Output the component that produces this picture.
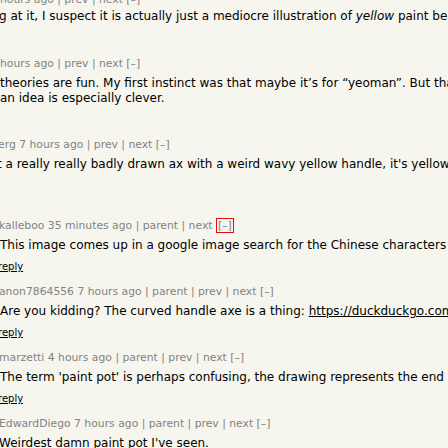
import React from 'react';

const font = "font-['DejaVu_Sans',Verdana,sans-serif]";

function Meta({ children, className = '' }: { children: React.ReactNode; className?: string }) {
  return (
    <div className={`text-[10.8px] leading-[13px] text-[#828282] whitespace-nowrap ${className}`}>{children}</div>
  );
}

function Text({ children, className = '' }: { children: React.ReactNode; className?: string }) {
  return <div className={`text-[12px] leading-[15px] text-black whitespace-nowrap ${className}`}>{children}</div>;
}

function Reply({ hidden = false }: { hidden?: boolean }) {
  return (
    <div className="text-[10px] leading-[13px] mt-[7px] ml-[-2px] h-[13px]">
      {!hidden && <span className="underline text-black">reply</span>}
    </div>
  );
}

export default function App() {
  return (
    <div className={`w-[448px] h-[448px] overflow-hidden bg-[#f6f6ef] ${font}`}>
      {/* comment cut at top */}
      <div className="mt-[-7px]">
        <Meta>hours ago | prev | next [–]</Meta>
        <Text className="mt-[3px] ml-[-1px]">
          g at it, I suspect it is actually just a mediocre illustration of <i>yellow</i> paint being
        </Text>
        <Reply hidden />
      </div>

      <div className="mt-[13px]">
        <Meta>hours ago | prev | next [–]</Meta>
        <Text className="mt-[6px]">
          theories are fun. My first instinct was that maybe it’s for “yeoman”. But that doesn’t
          <br />
          an idea is especially clever.
        </Text>
        <Reply hidden />
      </div>

      <div className="mt-[12px]">
        <Meta className="ml-[-2px]">erg 7 hours ago | prev | next [–]</Meta>
        <Text className="mt-[6px] ml-[-3px]">
          t a really really badly drawn ax with a weird wavy yellow handle, it's yellow
        </Text>
        <Reply hidden />
      </div>

      <div className="mt-[27px]">
        <Meta className="ml-[-1px]">
          kalleboo 35 minutes ago | parent | next{' '}
          <span className="border border-[#e01010] px-[1px] py-[0px]">[–]</span>
        </Meta>
        <Text className="mt-[6px]">
          This image comes up in a google image search for the Chinese characters
        </Text>
        <Reply />
      </div>

      <div className="mt-[12px]">
        <Meta className="ml-[-1px]">anon7864556 7 hours ago | parent | prev | next [–]</Meta>
        <Text className="mt-[6px]">
          Are you kidding? The curved handle axe is a thing:{' '}
          <span className="underline">https://duckduckgo.com/?q=curved+handle+axe</span>
        </Text>
        <Reply />
      </div>

      <div className="mt-[12px]">
        <Meta className="ml-[-1px]">marzetti 4 hours ago | parent | prev | next [–]</Meta>
        <Text className="mt-[6px]">
          The term 'paint pot' is perhaps confusing, the drawing represents the end
        </Text>
        <Reply />
      </div>

      <div className="mt-[12px]">
        <Meta className="ml-[-1px]">EdwardDiego 7 hours ago | parent | prev | next [–]</Meta>
        <Text className="mt-[6px] ml-[-1px]">Weirdest damn paint pot I've seen.</Text>
        <Reply />
      </div>
    </div>
  );
}
